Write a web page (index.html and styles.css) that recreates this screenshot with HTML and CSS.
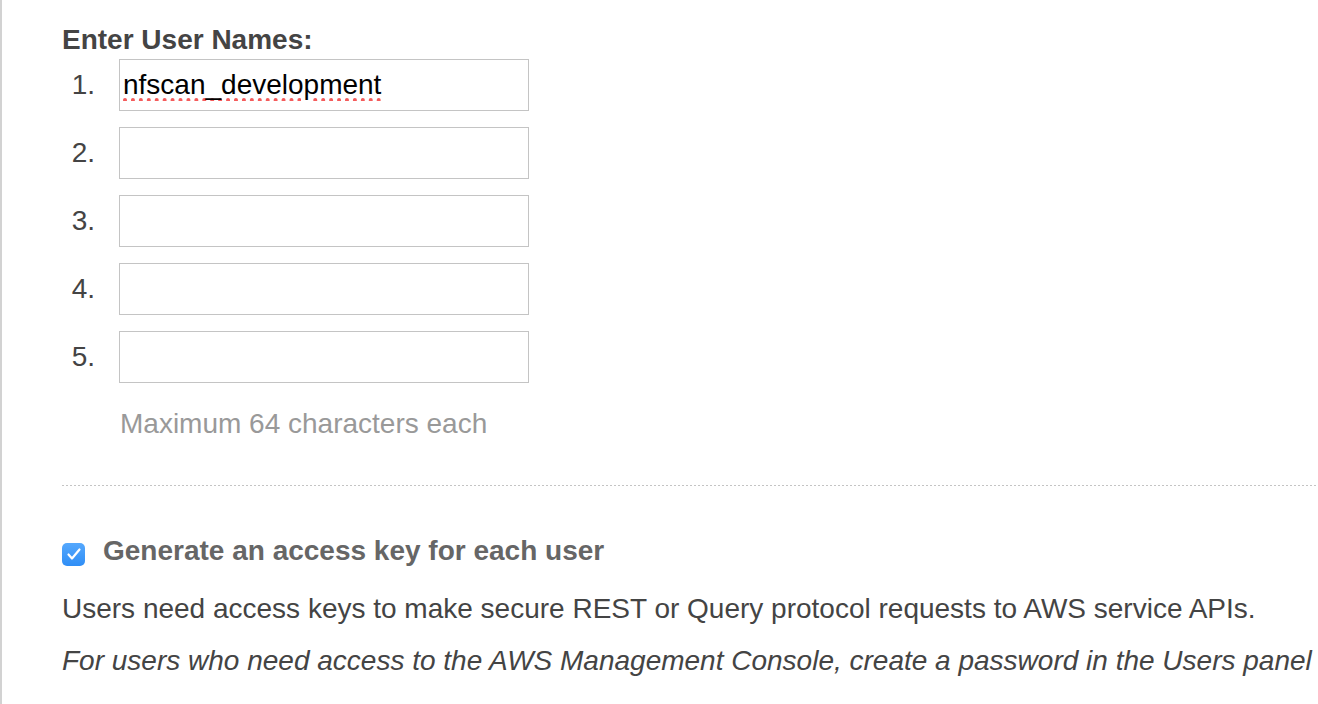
FILE: index.html
```html
<!DOCTYPE html>
<html>
<head>
<meta charset="utf-8">
<link rel="stylesheet" href="styles.css">
</head>
<body>
<div class="page">
  <h2 class="heading">Enter User Names:</h2>
  <div class="names">
    <span class="num">1.</span><input class="field filled" type="text" value="nfscan_development" spellcheck="false">
    <span class="num">2.</span><input class="field" type="text" spellcheck="false">
    <span class="num">3.</span><input class="field" type="text" spellcheck="false">
    <span class="num">4.</span><input class="field" type="text" spellcheck="false">
    <span class="num">5.</span><input class="field" type="text" spellcheck="false">
  </div>
  <p class="hint">Maximum 64 characters each</p>
  <div class="divider"></div>
  <label class="check-row">
    <span class="checkbox">
      <svg width="16" height="14" viewBox="0 0 16 14"><path d="M2.5 7.5 L6 11.5 L13.5 2.5" fill="none" stroke="#fff" stroke-width="2.2" stroke-linecap="round" stroke-linejoin="round"/></svg>
    </span>
    <span class="check-label">Generate an access key for each user</span>
  </label>
  <p class="desc">Users need access keys to make secure REST or Query protocol requests to AWS service APIs.</p>
  <p class="note">For users who need access to the AWS Management Console, create a password in the Users panel after completing this wizard.</p>
</div>
</body>
</html>
```
FILE: styles.css
```css
html, body {
  margin: 0;
  padding: 0;
  background: #fff;
  overflow: hidden;
}
body {
  font-family: "Liberation Sans", Arial, Helvetica, sans-serif;
  font-size: 28px;
  line-height: 32px;
  color: #444;
}
.page {
  border-left: 2px solid #d2d2d2;
  min-height: 704px;
  padding: 24px 0 0 60px;
  box-sizing: border-box;
}
.heading {
  margin: 0;
  font-size: 28px;
  line-height: 32px;
  font-weight: bold;
  color: #444;
}
.names {
  margin-top: 3px;
  display: grid;
  grid-template-columns: 33px 410px;
  column-gap: 24px;
  row-gap: 16px;
  align-items: center;
}
.num {
  text-align: right;
  color: #444;
}
.field {
  box-sizing: border-box;
  width: 410px;
  height: 52px;
  margin: 0;
  border: 1px solid #c4c4c4;
  border-radius: 0;
  padding: 0 0 0 3px;
  font-family: "Liberation Sans", Arial, Helvetica, sans-serif;
  font-size: 28px;
  color: #000;
  background: #fff;
  outline: none;
}
.filled {
  text-decoration: underline dotted #f45b5b;
  text-decoration-thickness: 3.5px;
  text-underline-offset: 4px;
}
.hint {
  margin: 25px 0 0 58px;
  color: #999;
}
.divider {
  margin-top: 45px;
  height: 1px;
  background-image: linear-gradient(to right, #c4c4c4 0 2.5px, transparent 2.5px 4px);
  background-size: 4px 1px;
  background-repeat: repeat-x;
}
.check-row {
  margin-top: 49px;
  display: flex;
  align-items: center;
  gap: 18px;
}
.checkbox {
  flex: none;
  width: 23px;
  height: 23px;
  border-radius: 5px;
  background: linear-gradient(#55a8fd, #2f8ef6);
  display: flex;
  align-items: center;
  justify-content: center;
  margin-top: 6px;
}
.check-label {
  font-weight: bold;
  color: #666;
}
.desc {
  margin: 26px 0 0 0;
  white-space: nowrap;
}
.note {
  margin: 20px 0 0 0;
  font-style: italic;
  white-space: nowrap;
}
```
